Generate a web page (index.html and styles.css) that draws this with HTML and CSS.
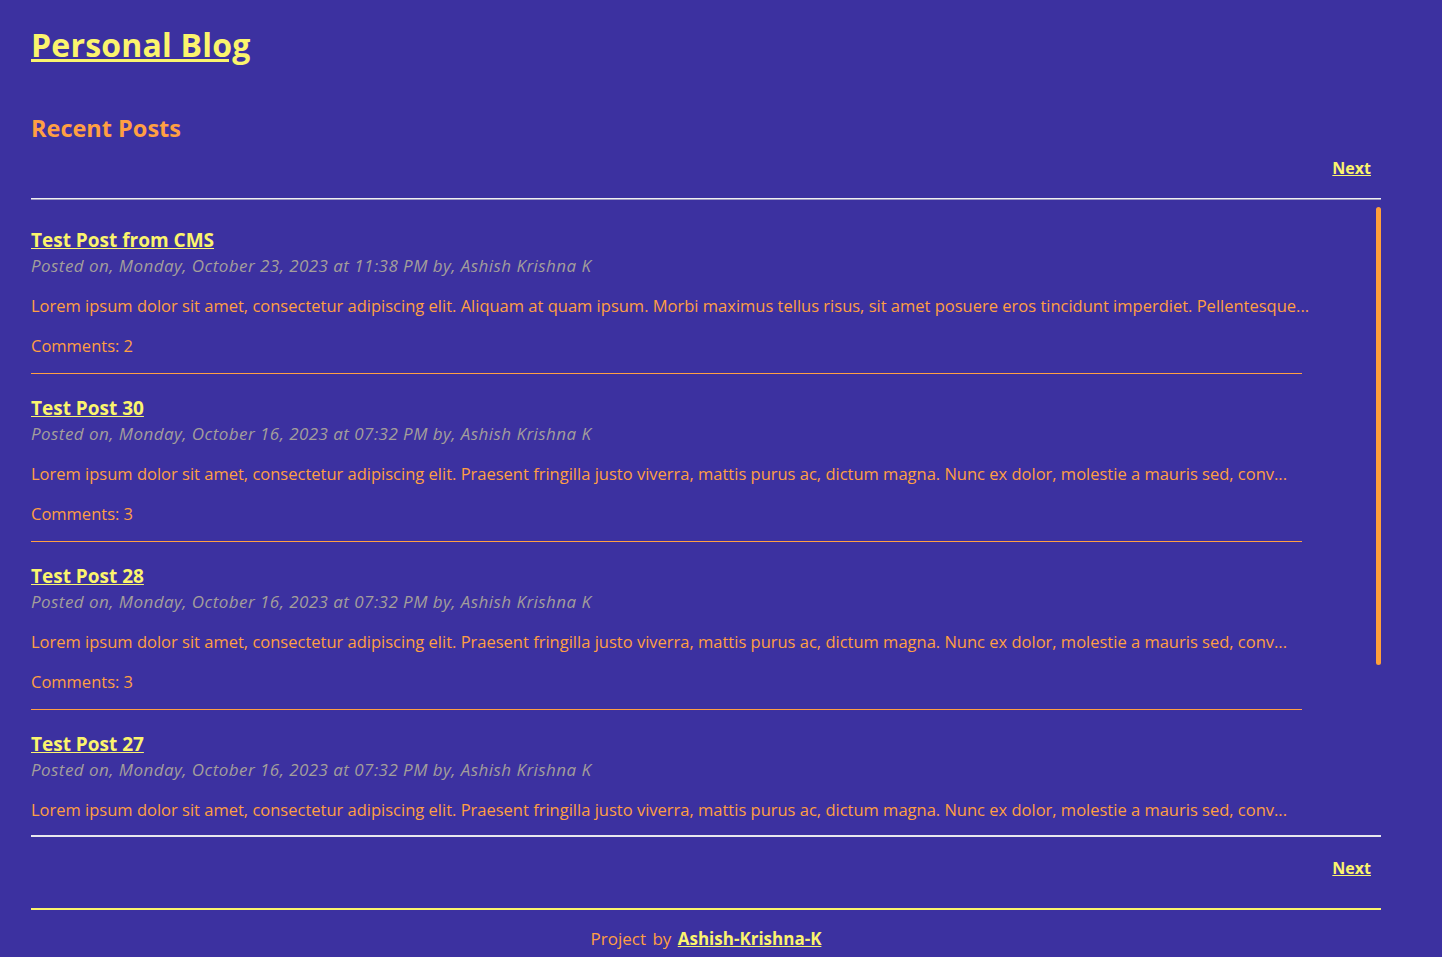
FILE: index.html
```html
<!DOCTYPE html>
<html lang="en">
<head>
<meta charset="utf-8">
<title>Personal Blog</title>
<link rel="stylesheet" href="styles.css">
</head>
<body>
<div class="page">
  <header class="site-header">
    <h1 class="site-title"><a href="#">Personal Blog</a></h1>
  </header>
  <main>
    <h2 class="section-title">Recent Posts</h2>
    <nav class="pager"><a href="#">Next</a></nav>
    <div class="post-scroller">
      <div class="post-list">
        <article class="post">
          <h3 class="post-title"><a href="#">Test Post from CMS</a></h3>
          <p class="post-meta">Posted on, Monday, October 23, 2023 at 11:38 PM by, Ashish Krishna K</p>
          <p class="post-excerpt">Lorem ipsum dolor sit amet, consectetur adipiscing elit. Aliquam at quam ipsum. Morbi maximus tellus risus, sit amet posuere eros tincidunt imperdiet. Pellentesque...</p>
          <p class="post-comments">Comments: 2</p>
        </article>
        <article class="post">
          <h3 class="post-title"><a href="#">Test Post 30</a></h3>
          <p class="post-meta">Posted on, Monday, October 16, 2023 at 07:32 PM by, Ashish Krishna K</p>
          <p class="post-excerpt">Lorem ipsum dolor sit amet, consectetur adipiscing elit. Praesent fringilla justo viverra, mattis purus ac, dictum magna. Nunc ex dolor, molestie a mauris sed, conv...</p>
          <p class="post-comments">Comments: 3</p>
        </article>
        <article class="post">
          <h3 class="post-title"><a href="#">Test Post 28</a></h3>
          <p class="post-meta">Posted on, Monday, October 16, 2023 at 07:32 PM by, Ashish Krishna K</p>
          <p class="post-excerpt">Lorem ipsum dolor sit amet, consectetur adipiscing elit. Praesent fringilla justo viverra, mattis purus ac, dictum magna. Nunc ex dolor, molestie a mauris sed, conv...</p>
          <p class="post-comments">Comments: 3</p>
        </article>
        <article class="post">
          <h3 class="post-title"><a href="#">Test Post 27</a></h3>
          <p class="post-meta">Posted on, Monday, October 16, 2023 at 07:32 PM by, Ashish Krishna K</p>
          <p class="post-excerpt">Lorem ipsum dolor sit amet, consectetur adipiscing elit. Praesent fringilla justo viverra, mattis purus ac, dictum magna. Nunc ex dolor, molestie a mauris sed, conv...</p>
          <p class="post-comments">Comments: 3</p>
        </article>
        <article class="post">
          <h3 class="post-title"><a href="#">Test Post 26</a></h3>
          <p class="post-meta">Posted on, Monday, October 16, 2023 at 07:32 PM by, Ashish Krishna K</p>
          <p class="post-excerpt">Lorem ipsum dolor sit amet, consectetur adipiscing elit. Praesent fringilla justo viverra, mattis purus ac, dictum magna. Nunc ex dolor, molestie a mauris sed, conv...</p>
          <p class="post-comments">Comments: 3</p>
        </article>
      </div>
      <div class="scroll-thumb"></div>
    </div>
    <nav class="pager pager-bottom"><a href="#">Next</a></nav>
  </main>
  <footer class="site-footer">
    <p>Project by <a href="#">Ashish-Krishna-K</a></p>
  </footer>
</div>
</body>
</html>
```

FILE: styles.css
```css
html, body {
  margin: 0;
  padding: 0;
}

body {
  background: #3c31a0;
  font-family: "Open Sans", "Noto Sans", sans-serif;
  color: #ff9f43;
}

.page {
  padding: 0 61px 0 31px;
}

a {
  color: #fbf46d;
  text-decoration: underline;
  font-weight: 700;
}

.site-header {
  padding-top: 25px;
}

.site-title {
  margin: 0;
  font-size: 32px;
  line-height: 40px;
  letter-spacing: 0.2px;
}

.section-title {
  margin: 48px 0 0;
  font-size: 23.5px;
  line-height: 30px;
  color: #ff9f43;
}

.pager {
  display: flex;
  justify-content: flex-end;
  padding: 12px 10px 17px 0;
  font-size: 16px;
  line-height: 26px;
  border-bottom: 1px solid #f0f0f0;
  box-shadow: 0 1px 0 #9d98c4;
}

.post-scroller {
  position: relative;
  margin-top: 1px;
}

.post-list {
  height: 637px;
  box-sizing: border-box;
  overflow-y: auto;
  padding-top: 6px;
  border-bottom: 2px solid #e8e8ee;
}

.post-list::-webkit-scrollbar {
  width: 5px;
}

.post-list::-webkit-scrollbar-thumb {
  background: #ff9f3a;
  border-radius: 3px;
}

.scroll-thumb {
  position: absolute;
  top: 7px;
  right: 0;
  width: 5px;
  height: 458px;
  border-radius: 3px;
  background: #ff9f3a;
}

.post {
  margin-right: 79px;
  padding: 21px 0 14px;
  border-bottom: 1px solid #ff9f43;
}

.post p {
  margin: 0;
}

.post-title {
  margin: 0;
  font-size: 19px;
  line-height: 26px;
}

.post-meta {
  font-style: italic;
  color: #a39e9b;
  font-size: 17px;
  line-height: 26px;
  letter-spacing: 0.45px;
}

.post-excerpt {
  margin-top: 14px !important;
  font-size: 16.5px;
  line-height: 26px;
  white-space: nowrap;
}

.post-comments {
  margin-top: 14px !important;
  font-size: 16.5px;
  line-height: 26px;
}

.pager-bottom {
  border-bottom: 2px solid #fbf46d;
  box-shadow: none;
  padding: 18px 10px 27px 0;
}

.site-footer {
  text-align: center;
  font-size: 17px;
  line-height: 26px;
  word-spacing: 2px;
}

.site-footer p {
  margin: 16px 0 20px;
}
```
